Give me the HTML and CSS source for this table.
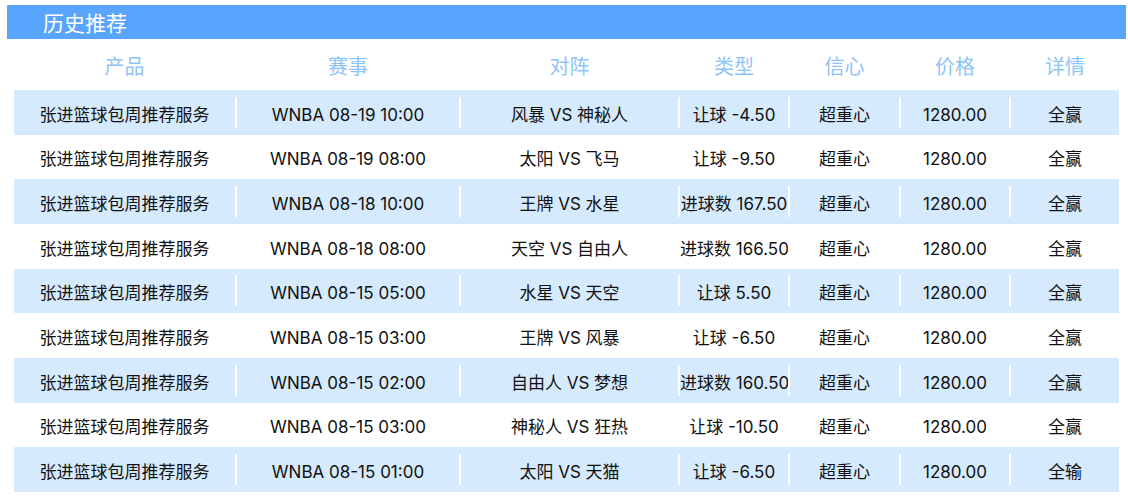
FILE: index.html
```html
<!DOCTYPE html>
<html lang="zh-CN">
<head>
<meta charset="utf-8">
<title>历史推荐</title>
<link rel="stylesheet" href="styles.css">
</head>
<body>
<div class="page">
  <div class="title-bar">历史推荐</div>
  <div class="table">
    <div class="row head">
      <div class="cell"><div class="in">产品</div></div>
      <div class="cell"><div class="in">赛事</div></div>
      <div class="cell"><div class="in">对阵</div></div>
      <div class="cell"><div class="in">类型</div></div>
      <div class="cell"><div class="in">信心</div></div>
      <div class="cell"><div class="in">价格</div></div>
      <div class="cell"><div class="in">详情</div></div>
    </div>
    <div class="row odd">
      <div class="cell"><div class="in">张进篮球包周推荐服务</div></div>
      <div class="cell"><div class="in">WNBA 08-19 10:00</div></div>
      <div class="cell"><div class="in">风暴 VS 神秘人</div></div>
      <div class="cell"><div class="in">让球 -4.50</div></div>
      <div class="cell"><div class="in">超重心</div></div>
      <div class="cell"><div class="in">1280.00</div></div>
      <div class="cell"><div class="in">全赢</div></div>
    </div>
    <div class="row">
      <div class="cell"><div class="in">张进篮球包周推荐服务</div></div>
      <div class="cell"><div class="in">WNBA 08-19 08:00</div></div>
      <div class="cell"><div class="in">太阳 VS 飞马</div></div>
      <div class="cell"><div class="in">让球 -9.50</div></div>
      <div class="cell"><div class="in">超重心</div></div>
      <div class="cell"><div class="in">1280.00</div></div>
      <div class="cell"><div class="in">全赢</div></div>
    </div>
    <div class="row odd">
      <div class="cell"><div class="in">张进篮球包周推荐服务</div></div>
      <div class="cell"><div class="in">WNBA 08-18 10:00</div></div>
      <div class="cell"><div class="in">王牌 VS 水星</div></div>
      <div class="cell"><div class="in">进球数 167.50</div></div>
      <div class="cell"><div class="in">超重心</div></div>
      <div class="cell"><div class="in">1280.00</div></div>
      <div class="cell"><div class="in">全赢</div></div>
    </div>
    <div class="row">
      <div class="cell"><div class="in">张进篮球包周推荐服务</div></div>
      <div class="cell"><div class="in">WNBA 08-18 08:00</div></div>
      <div class="cell"><div class="in">天空 VS 自由人</div></div>
      <div class="cell"><div class="in">进球数 166.50</div></div>
      <div class="cell"><div class="in">超重心</div></div>
      <div class="cell"><div class="in">1280.00</div></div>
      <div class="cell"><div class="in">全赢</div></div>
    </div>
    <div class="row odd">
      <div class="cell"><div class="in">张进篮球包周推荐服务</div></div>
      <div class="cell"><div class="in">WNBA 08-15 05:00</div></div>
      <div class="cell"><div class="in">水星 VS 天空</div></div>
      <div class="cell"><div class="in">让球 5.50</div></div>
      <div class="cell"><div class="in">超重心</div></div>
      <div class="cell"><div class="in">1280.00</div></div>
      <div class="cell"><div class="in">全赢</div></div>
    </div>
    <div class="row">
      <div class="cell"><div class="in">张进篮球包周推荐服务</div></div>
      <div class="cell"><div class="in">WNBA 08-15 03:00</div></div>
      <div class="cell"><div class="in">王牌 VS 风暴</div></div>
      <div class="cell"><div class="in">让球 -6.50</div></div>
      <div class="cell"><div class="in">超重心</div></div>
      <div class="cell"><div class="in">1280.00</div></div>
      <div class="cell"><div class="in">全赢</div></div>
    </div>
    <div class="row odd">
      <div class="cell"><div class="in">张进篮球包周推荐服务</div></div>
      <div class="cell"><div class="in">WNBA 08-15 02:00</div></div>
      <div class="cell"><div class="in">自由人 VS 梦想</div></div>
      <div class="cell"><div class="in">进球数 160.50</div></div>
      <div class="cell"><div class="in">超重心</div></div>
      <div class="cell"><div class="in">1280.00</div></div>
      <div class="cell"><div class="in">全赢</div></div>
    </div>
    <div class="row">
      <div class="cell"><div class="in">张进篮球包周推荐服务</div></div>
      <div class="cell"><div class="in">WNBA 08-15 03:00</div></div>
      <div class="cell"><div class="in">神秘人 VS 狂热</div></div>
      <div class="cell"><div class="in">让球 -10.50</div></div>
      <div class="cell"><div class="in">超重心</div></div>
      <div class="cell"><div class="in">1280.00</div></div>
      <div class="cell"><div class="in">全赢</div></div>
    </div>
    <div class="row odd">
      <div class="cell"><div class="in">张进篮球包周推荐服务</div></div>
      <div class="cell"><div class="in">WNBA 08-15 01:00</div></div>
      <div class="cell"><div class="in">太阳 VS 天猫</div></div>
      <div class="cell"><div class="in">让球 -6.50</div></div>
      <div class="cell"><div class="in">超重心</div></div>
      <div class="cell"><div class="in">1280.00</div></div>
      <div class="cell"><div class="in">全输</div></div>
    </div>
  </div>
</div>
</body>
</html>
```

FILE: styles.css
```css
* { box-sizing: border-box; }
html, body { margin: 0; padding: 0; background: #fff; }
body {
  font-family: "Inter", "Noto Sans CJK SC", sans-serif;
  color: #111;
}
.page {
  padding: 5px 2px 0 7px;
}
.title-bar {
  width: 1119px;
  height: 34px;
  background: #59a5fd;
  color: #fff;
  font-size: 21px;
  line-height: 34px;
  padding-left: 36px;
  font-family: "Noto Sans CJK SC", sans-serif;
}
.table {
  margin-left: 7px;
  width: 1105px;
}
.row {
  display: grid;
  grid-template-columns: 221px 224px 219px 110px 111px 110px 110px;
  height: 44.67px;
  align-items: center;
  font-size: 17px;
}
.row.odd { background: #d6eafd; }
.row.head {
  height: 51px;
  background: #fff;
  font-size: 20px;
  color: #8ec4f6;
  padding-top: 0;
}
.row.head .in { border-left-color: transparent; }
.cell {
  display: flex;
  align-items: center;
  min-width: 0;
}
.in {
  flex: 1;
  min-width: 0;
  height: 31px;
  line-height: 31px;
  padding-top: 3px;
  text-align: center;
  white-space: nowrap;
  overflow: hidden;
  border-left: 2px solid #fff;
}
.cell:first-child .in { border-left: 0; }
```
